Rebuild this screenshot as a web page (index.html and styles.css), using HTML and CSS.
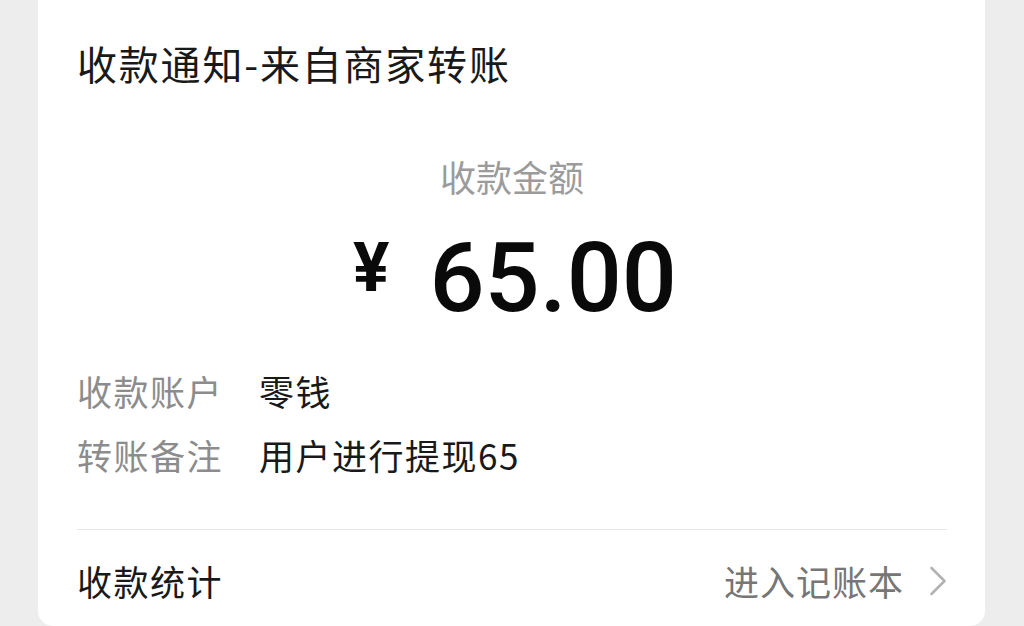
FILE: index.html
```html
<!DOCTYPE html>
<html lang="zh-CN">
<head>
<meta charset="utf-8">
<title>收款通知</title>
<link rel="stylesheet" href="styles.css">
</head>
<body>
<div class="card">
  <div class="title">收款通知-来自商家转账</div>
  <div class="amount-label">收款金额</div>
  <div class="amount"><span class="yen">¥</span><span class="num">65.00</span></div>
  <div class="rows">
    <div class="row"><span class="label">收款账户</span><span class="value">零钱</span></div>
    <div class="row"><span class="label">转账备注</span><span class="value">用户进行提现65</span></div>
  </div>
  <div class="divider"></div>
  <div class="footer">
    <span class="footer-title">收款统计</span>
    <span class="footer-link">进入记账本<svg class="chev" width="18" height="30" viewBox="0 0 18 30"><polyline points="2.5,2 15.5,15 2.5,28" fill="none" stroke="#b3b3b3" stroke-width="2.6" stroke-linecap="round" stroke-linejoin="round"/></svg></span>
  </div>
</div>
</body>
</html>
```
FILE: styles.css
```css
html, body {
  margin: 0;
  padding: 0;
}
body {
  background: #ededed;
  width: 1024px;
  height: 626px;
  overflow: hidden;
  font-family: "Noto Sans CJK SC", "Noto Sans", sans-serif;
  color: #191919;
}
.card {
  margin: 0 39px 0 38px;
  height: 626px;
  background: #ffffff;
  border-radius: 0 0 15px 15px;
  padding: 35px 38px 0 39px;
  box-sizing: border-box;
  display: flex;
  flex-direction: column;
}
.title {
  font-size: 40px;
  line-height: 56px;
  height: 56px;
  letter-spacing: 1.8px;
}
.amount-label {
  margin-top: 60px;
  font-size: 36px;
  line-height: 50px;
  height: 50px;
  color: #9b9b9b;
  text-align: center;
}
.amount {
  margin-top: 27px;
  height: 100px;
  display: flex;
  justify-content: center;
  align-items: baseline;
  font-family: Roboto, "Noto Sans", sans-serif;
  line-height: 100px;
  color: #0a0a0a;
}
.yen {
  font-size: 68px;
  font-weight: 700;
  margin-right: 40px;
  margin-left: 6px;
  position: relative;
  top: -20px;
}
.num {
  font-size: 97px;
  font-weight: 500;
}
.rows {
  margin-top: 31px;
  display: flex;
  flex-direction: column;
}
.row {
  display: flex;
  height: 64px;
  line-height: 64px;
  font-size: 35px;
  letter-spacing: 1.5px;
}
.label {
  width: 182px;
  color: #8c8c8c;
}
.value {
  color: #191919;
}
.divider {
  margin-top: 42px;
  height: 1px;
  background: #e6e6e6;
}
.footer {
  margin-top: 19px;
  height: 64px;
  display: flex;
  align-items: center;
  justify-content: space-between;
  font-size: 35px;
  line-height: 64px;
}
.footer-title {
  letter-spacing: 1.5px;
}
.footer-link {
  display: flex;
  align-items: center;
  color: #767676;
  letter-spacing: 1px;
}
.chev {
  margin-left: 25px;
}
```
